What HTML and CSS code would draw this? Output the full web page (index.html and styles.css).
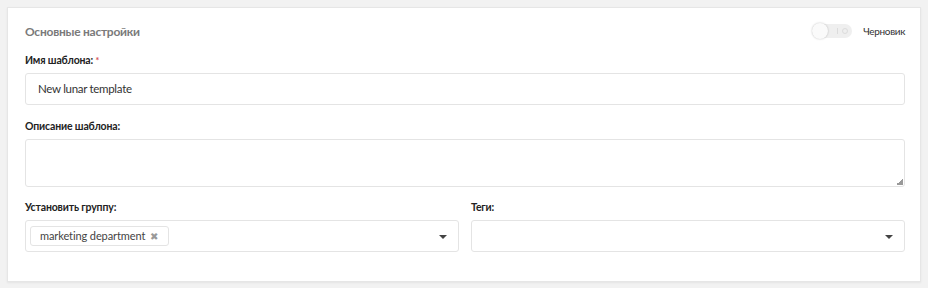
FILE: index.html
```html
<!DOCTYPE html>
<html lang="ru">
<head>
<meta charset="utf-8">
<link rel="stylesheet" href="styles.css">
</head>
<body>
<div class="card">
  <div class="card-head">
    <h2 class="title">Основные настройки</h2>
    <label class="draft">
      <span class="switch"><span class="knob"></span><span class="mark-i"></span><span class="mark-o"></span></span>
      <span class="draft-text">Черновик</span>
    </label>
  </div>
  <div class="field f-name">
    <div class="label">Имя шаблона: <span class="req">*</span></div>
    <div class="input">New lunar template</div>
  </div>
  <div class="field f-desc">
    <div class="label">Описание шаблона:</div>
    <div class="textarea"><span class="grip"></span></div>
  </div>
  <div class="row">
    <div class="field col">
      <div class="label">Установить группу:</div>
      <div class="select">
        <span class="tag">marketing department <span class="tag-x">✖</span></span>
        <span class="caret"></span>
      </div>
    </div>
    <div class="field col">
      <div class="label">Теги:</div>
      <div class="select">
        <span class="caret"></span>
      </div>
    </div>
  </div>
</div>
</body>
</html>
```

FILE: styles.css
```css
html, body { margin: 0; padding: 0; }
body {
  background: #f2f2f2;
  font-family: "Lato", "Liberation Sans", sans-serif;
  color: #333;
  padding: 7px;
  height: 288px;
  box-sizing: border-box;
}
.card {
  background: #fff;
  border: 1px solid #e6e6e6;
  box-shadow: 0 1px 2px rgba(0,0,0,0.06);
  padding: 13px 15px 29px 17px;
  width: 914px;
  box-sizing: border-box;
}
.card-head {
  display: flex;
  align-items: center;
  justify-content: space-between;
  height: 20px;
  margin-bottom: 13px;
}
.title {
  margin: 0;
  font-size: 12px;
  letter-spacing: -0.25px;
  font-weight: 700;
  color: #7a7a7a;
}
.draft { display: flex; align-items: center; gap: 11px; }
.switch {
  position: relative;
  width: 40px;
  height: 14px;
  border-radius: 8px;
  background: #efefef;
  display: block;
}
.knob {
  position: absolute;
  left: 0; top: -1px;
  width: 16px; height: 16px;
  border-radius: 50%;
  background: #fafafa;
  box-shadow: 0 0 2px rgba(0,0,0,0.25);
}
.mark-i { position: absolute; left: 25px; top: 4px; width: 1px; height: 6px; background: #dcdcdc; }
.mark-o { position: absolute; left: 30px; top: 4px; width: 4px; height: 4px; border: 1px solid #dcdcdc; border-radius: 50%; }
.draft-text { font-size: 10px; letter-spacing: -0.35px; color: #333; }
.field { margin-bottom: 16px; }
.f-name { margin-bottom: 15px; }
.f-desc { margin-bottom: 14px; }
.label {
  font-size: 10.5px;
  letter-spacing: -0.15px;
  font-weight: 700;
  color: #222;
  margin-bottom: 6px;
  line-height: 13px;
}
.req { color: #d9534f; font-size: 9px; vertical-align: top; }
.input {
  height: 32px;
  border: 1px solid #e4e4e4;
  border-radius: 3px;
  box-sizing: border-box;
  padding: 0 12px;
  font-size: 11.5px;
  letter-spacing: -0.3px;
  line-height: 30px;
  color: #333;
}
.textarea {
  position: relative;
  height: 48px;
  border: 1px solid #e4e4e4;
  border-radius: 3px;
  box-sizing: border-box;
}
.grip {
  position: absolute;
  right: 1px; bottom: 1px;
  width: 7px; height: 7px;
  background: linear-gradient(135deg, transparent 50%, #999 50%);
}
.row { display: flex; gap: 12px; }
.col { flex: 1; margin-bottom: 0; }
.select {
  position: relative;
  height: 32px;
  border: 1px solid #e4e4e4;
  border-radius: 3px;
  box-sizing: border-box;
  display: flex;
  align-items: center;
  padding: 0 4px;
}
.tag {
  border: 1px solid #e4e4e4;
  border-radius: 3px;
  height: 20px;
  box-sizing: border-box;
  padding: 0 10px 0 9px;
  font-size: 11px;
  letter-spacing: -0.1px;
  line-height: 18px;
  color: #444;
  display: flex;
  align-items: center;
  gap: 5px;
}
.tag-x { color: #999; font-size: 10px; }
.caret {
  position: absolute;
  right: 11px; top: 14px;
  width: 0; height: 0;
  border-left: 4px solid transparent;
  border-right: 4px solid transparent;
  border-top: 4px solid #444;
}
```
